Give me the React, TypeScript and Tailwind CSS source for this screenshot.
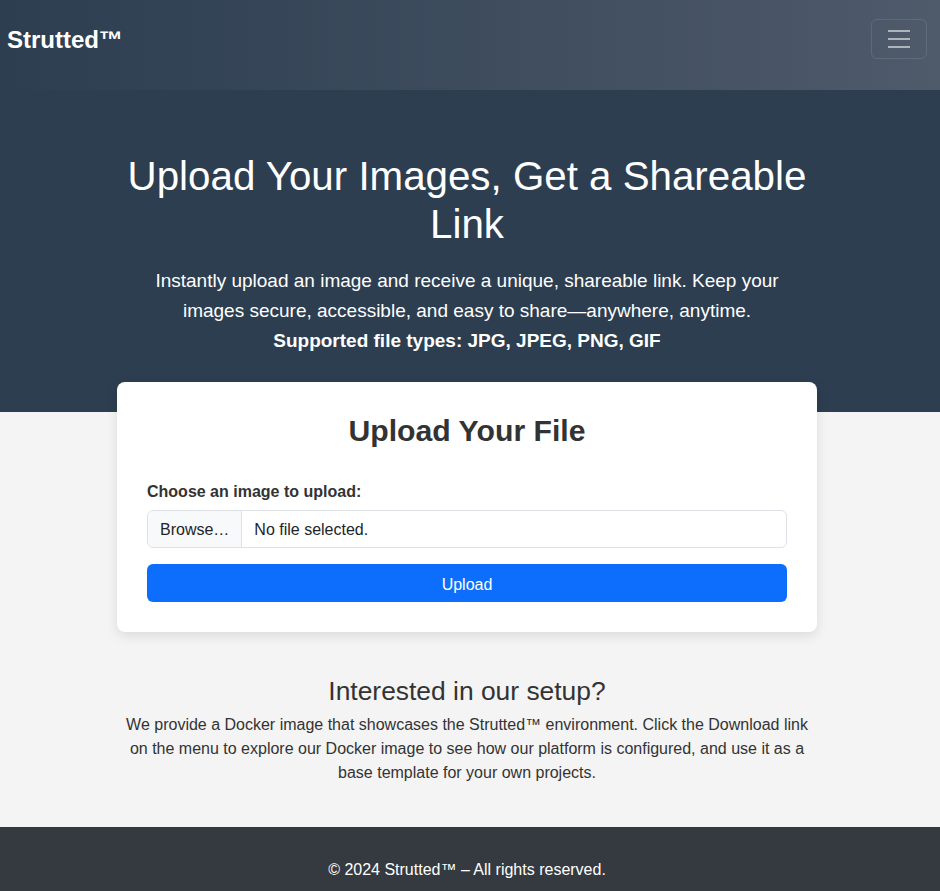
export default function App() {
  return (
    <div className="min-h-screen bg-[#f4f4f4] text-[#333333] font-['Liberation_Sans',Arial,sans-serif]">
      {/* Navbar */}
      <nav className="h-[90px] bg-gradient-to-r from-[#2c3e50] to-[#4f5a6b] flex items-start justify-between pl-[7px] pr-[13px] pt-[19px]">
        <a href="#" className="text-white text-[24px] font-bold leading-[40px] pt-[1px]">
          Strutted™
        </a>
        <button
          type="button"
          className="w-[56px] h-[40px] rounded-[6px] border border-white/10 flex items-center justify-center"
        >
          <svg width="30" height="30" viewBox="0 0 30 30" fill="none">
            <path
              d="M4 7h22M4 15h22M4 23h22"
              stroke="rgba(255,255,255,0.55)"
              strokeWidth="2"
              strokeLinecap="butt"
            />
          </svg>
        </button>
      </nav>

      {/* Hero */}
      <section className="bg-[#2c3e50] text-white pt-[63px] pb-[56px] flex justify-center pr-[6px]">
        <div className="w-[684px] text-center">
          <h1 className="text-[40.3px] leading-[48px] font-normal mb-[17px]">
            Upload Your Images, Get a Shareable Link
          </h1>
          <p className="text-[19px] leading-[30px]">
            Instantly upload an image and receive a unique, shareable link. Keep your images secure,
            accessible, and easy to share—anywhere, anytime.
            <br />
            <strong className="font-bold">Supported file types: JPG, JPEG, PNG, GIF</strong>
          </p>
        </div>
      </section>

      {/* Upload card */}
      <div className="flex justify-center pr-[6px] -mt-[30px]">
        <div className="w-[700px] bg-white rounded-[8px] shadow-[0_4px_12px_rgba(0,0,0,0.1)] p-[30px]">
          <h2 className="text-[30.2px] leading-[36px] font-bold text-center text-[#333333] pt-[1px] mb-[30px]">
            Upload Your File
          </h2>
          <label className="block text-[16px] leading-[24px] font-bold pt-[1px] mb-[6px]">
            Choose an image to upload:
          </label>
          <div className="flex h-[38px] border border-[#dee2e6] rounded-[6px] overflow-hidden text-[16px] leading-[24px]">
            <span className="bg-[#f8f9fa] border-r border-[#dee2e6] px-[12px] pt-[7px] text-[#212529]">
              Browse…
            </span>
            <span className="px-[12px] pt-[7px] text-[#212529]">No file selected.</span>
          </div>
          <button
            type="button"
            className="mt-[16px] w-full h-[38px] bg-[#0d6efd] text-white text-[16px] leading-[24px] pt-[3px] rounded-[6px]"
          >
            Upload
          </button>
        </div>
      </div>

      {/* Setup info */}
      <section className="flex justify-center pr-[6px] pt-[42px] pb-[42px]">
        <div className="w-[700px] text-center">
          <h3 className="text-[26.4px] leading-[34px] font-normal mb-[5px]">Interested in our setup?</h3>
          <p className="text-[16px] leading-[24px]">
            We provide a Docker image that showcases the Strutted™ environment. Click the Download link
            on the menu to explore our Docker image to see how our platform is configured, and use it as
            a base template for your own projects.
          </p>
        </div>
      </section>

      {/* Footer */}
      <footer className="bg-[#343a40] text-white text-center py-[30px] pr-[6px]">
        <p className="text-[16px] leading-[24px] pt-[1px]">© 2024 Strutted™ – All rights reserved.</p>
      </footer>
    </div>
  );
}
